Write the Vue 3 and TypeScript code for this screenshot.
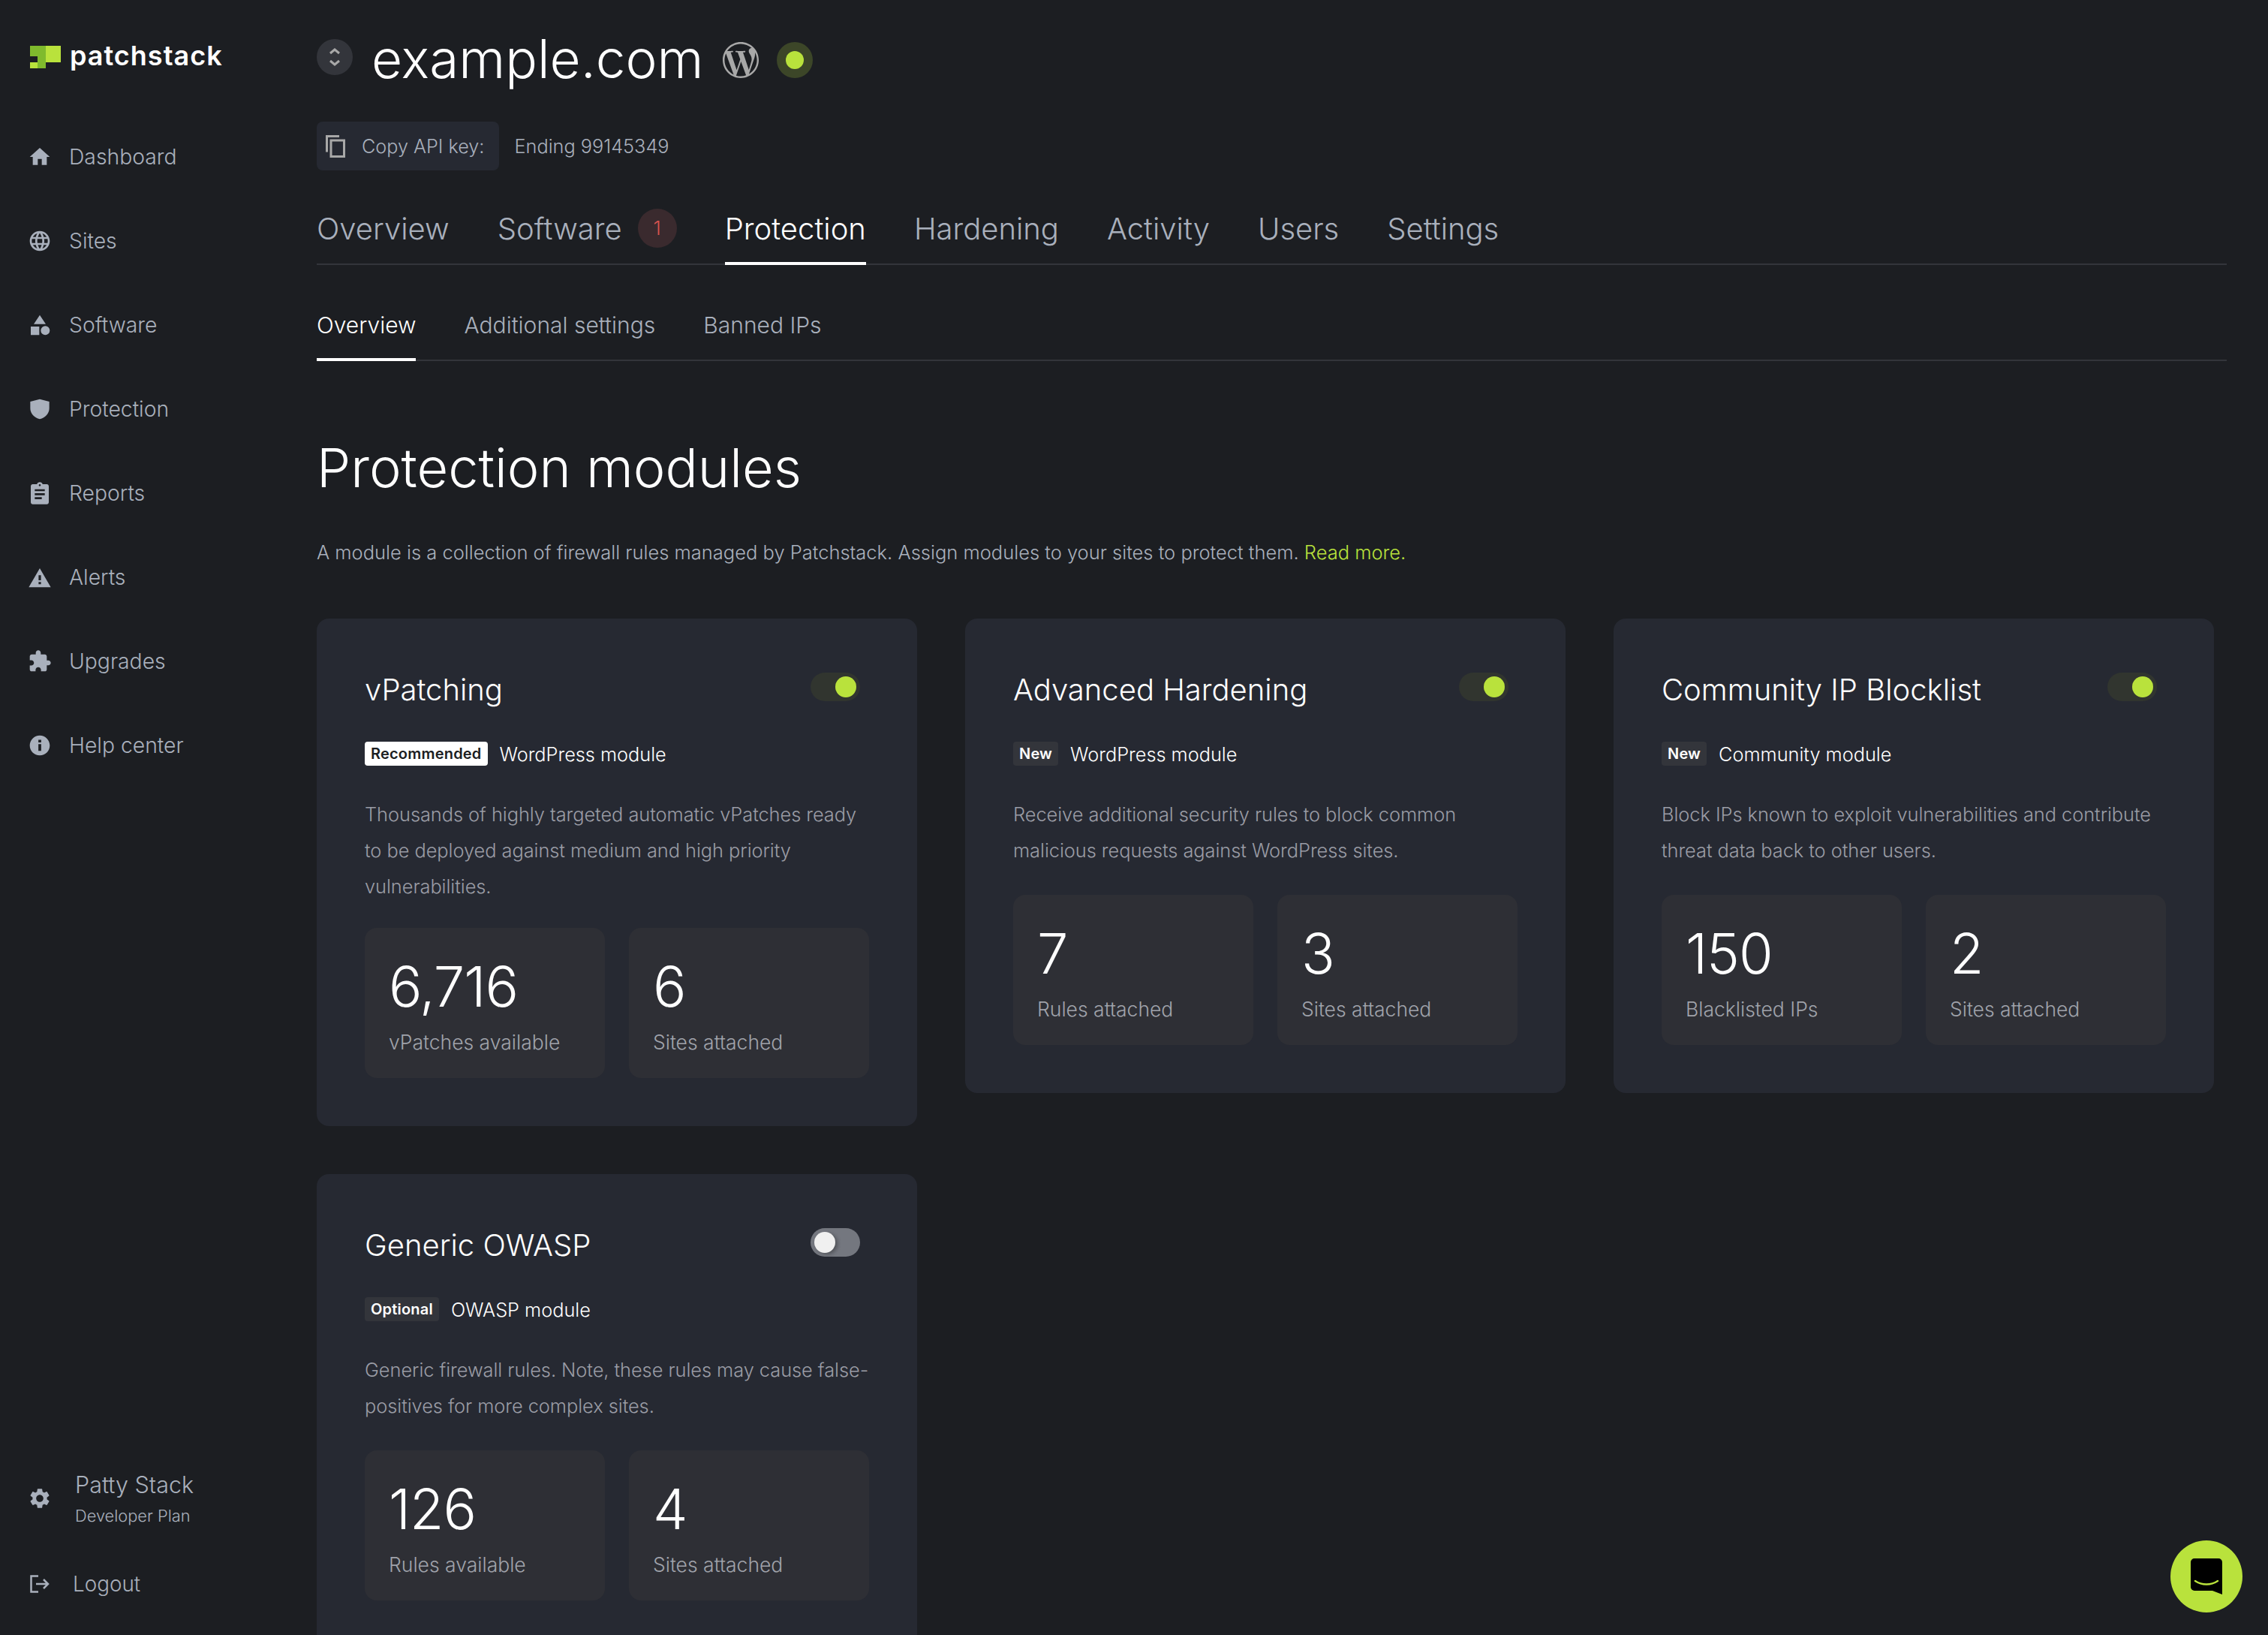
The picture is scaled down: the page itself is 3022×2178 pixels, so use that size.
<script setup lang="ts">
import { ref } from "vue"

type Stat = { value: string; label: string }
type Module = {
  title: string
  on: boolean
  badge: string
  badgeKind: string
  kind: string
  text: string
  stats: Stat[]
}

const navItems = [
  { label: "Dashboard", icon: "home" },
  { label: "Sites", icon: "globe" },
  { label: "Software", icon: "shapes" },
  { label: "Protection", icon: "shield" },
  { label: "Reports", icon: "report" },
  { label: "Alerts", icon: "alert" },
  { label: "Upgrades", icon: "puzzle" },
  { label: "Help center", icon: "info" },
]

const iconPaths: Record<string, string> = {
  home: "M10 20v-6h4v6h5v-8h3L12 3 2 12h3v8z",
  globe:
    "M11.99 2C6.47 2 2 6.48 2 12s4.47 10 9.99 10C17.52 22 22 17.52 22 12S17.52 2 11.99 2zm6.93 6h-2.95c-.32-1.25-.78-2.45-1.38-3.56 1.84.63 3.37 1.91 4.33 3.56zM12 4.04c.83 1.2 1.48 2.53 1.91 3.96h-3.82c.43-1.43 1.08-2.76 1.91-3.96zM4.26 14C4.1 13.36 4 12.69 4 12s.1-1.36.26-2h3.38c-.08.66-.14 1.32-.14 2 0 .68.06 1.34.14 2H4.26zm.82 2h2.95c.32 1.25.78 2.45 1.38 3.56-1.84-.63-3.37-1.9-4.33-3.56zm2.95-8H5.08c.96-1.66 2.49-2.93 4.33-3.56C8.81 5.55 8.35 6.75 8.03 8zM12 19.96c-.83-1.2-1.48-2.53-1.91-3.96h3.82c-.43 1.43-1.08 2.76-1.91 3.96zM14.34 14H9.66c-.09-.66-.16-1.32-.16-2 0-.68.07-1.35.16-2h4.68c.09.65.16 1.32.16 2 0 .68-.07 1.34-.16 2zm.25 5.56c.6-1.11 1.06-2.31 1.38-3.56h2.95c-.96 1.65-2.49 2.93-4.33 3.56zM16.36 14c.08-.66.14-1.32.14-2 0-.68-.06-1.34-.14-2h3.38c.16.64.26 1.31.26 2s-.1 1.36-.26 2h-3.38z",
  shapes: "M12 2l6 9H6zM3 13.5h8.5V22H3zM17.5 13a4.5 4.5 0 1 1 0 9 4.5 4.5 0 0 1 0-9z",
  shield: "M12 2l9.500 2.500v6.500c0 5.500-4 9.500-9.500 11-5.500-1.500-9.500-5.500-9.500-11V4.500z",
  report:
    "M19 3h-4.180C14.400 1.840 13.300 1 12 1c-1.300 0-2.400.840-2.820 2H5c-1.100 0-2 .900-2 2v16c0 1.100.900 2 2 2h14c1.100 0 2-.900 2-2V5c0-1.100-.900-2-2-2zm-7 0c.550 0 1 .450 1 1s-.450 1-1 1-1-.450-1-1 .450-1 1-1zm2 15H7v-2h7v2zm3-4H7v-2h10v2zm0-4H7V8h10v2z",
  alert: "M1 22h22L12 3 1 22zm12.200-3h-2.400v-2.400h2.400V19zm0-4h-2.400v-5h2.400v5z",
  puzzle:
    "M20.500 11H19V7c0-1.100-.900-2-2-2h-4V3.500C13 2.120 11.880 1 10.500 1S8 2.120 8 3.500V5H4c-1.100 0-1.990.900-1.990 2v3.800H3.500c1.490 0 2.700 1.210 2.700 2.700s-1.210 2.700-2.700 2.700H2V20c0 1.100.900 2 2 2h3.800v-1.500c0-1.490 1.210-2.700 2.700-2.700 1.490 0 2.700 1.210 2.700 2.700V22H17c1.100 0 2-.900 2-2v-4h1.500c1.380 0 2.500-1.120 2.500-2.500S21.880 11 20.500 11z",
  info: "M12 2C6.480 2 2 6.480 2 12s4.480 10 10 10 10-4.480 10-10S17.520 2 12 2zm1.400 15.500h-2.800v-6.800h2.800v6.800zm0-8.500h-2.800V6.300h2.800V9z",
  gear: "M19.140 12.940c.040-.300.060-.610.060-.940 0-.320-.020-.640-.070-.940l2.030-1.580c.180-.140.230-.410.120-.610l-1.920-3.320c-.120-.220-.370-.290-.590-.220l-2.390.960c-.500-.380-1.030-.700-1.620-.940l-.360-2.540c-.040-.240-.240-.410-.480-.410h-3.840c-.240 0-.430.170-.470.410l-.360 2.540c-.590.240-1.130.570-1.620.940l-2.390-.960c-.220-.080-.470 0-.590.220L2.740 8.870c-.120.210-.080.470.120.610l2.030 1.580c-.050.300-.090.630-.090.940s.020.640.07.940l-2.030 1.580c-.180.140-.230.410-.120.610l1.920 3.320c.120.220.370.290.590.220l2.390-.960c.500.380 1.030.700 1.620.940l.360 2.540c.050.240.240.410.480.410h3.840c.240 0 .440-.170.470-.410l.360-2.540c.590-.240 1.130-.560 1.620-.940l2.390.960c.220.080.470 0 .590-.220l1.920-3.320c.120-.220.070-.470-.120-.610l-2.010-1.580zM12 15.600c-1.980 0-3.600-1.620-3.600-3.600s1.620-3.600 3.600-3.600 3.600 1.620 3.600 3.600-1.620 3.600-3.600 3.600z",
}

const wpPath =
  "M21.469 6.825c.84 1.537 1.318 3.3 1.318 5.175 0 3.979-2.156 7.456-5.363 9.325l3.295-9.527c.615-1.54.82-2.771.82-3.864 0-.405-.026-.78-.07-1.11m-7.981.105c.647-.03 1.232-.105 1.232-.105.582-.075.514-.93-.067-.899 0 0-1.755.135-2.88.135-1.064 0-2.85-.15-2.85-.15-.585-.03-.661.855-.075.885 0 0 .54.061 1.125.09l1.68 4.605-2.37 7.08L5.354 6.9c.649-.03 1.234-.1 1.234-.1.585-.075.516-.93-.065-.896 0 0-1.746.138-2.874.138-.2 0-.438-.008-.69-.015C4.911 3.15 8.235 1.215 12 1.215c2.809 0 5.365 1.072 7.286 2.833-.046-.003-.091-.009-.141-.009-1.06 0-1.812.923-1.812 1.914 0 .89.513 1.643 1.06 2.531.411.72.89 1.643.89 2.977 0 .915-.354 1.994-.821 3.479l-1.075 3.585-3.9-11.61.001.014zM12 22.784c-1.059 0-2.081-.153-3.048-.437l3.237-9.406 3.315 9.087c.024.053.05.101.078.149-1.12.393-2.325.609-3.582.609M1.211 12c0-1.564.336-3.05.935-4.39L7.29 21.709C3.694 19.96 1.212 16.271 1.211 12M12 0C5.385 0 0 5.385 0 12s5.385 12 12 12 12-5.385 12-12S18.615 0 12 0"

const tabs = ["Overview", "Software", "Protection", "Hardening", "Activity", "Users", "Settings"]
const subTabs = ["Overview", "Additional settings", "Banned IPs"]
const activeTab = ref("Protection")
const activeSub = ref("Overview")

const modules: Module[] = [
  {
    title: "vPatching",
    on: true,
    badge: "Recommended",
    badgeKind: "white",
    kind: "WordPress module",
    text: "Thousands of highly targeted automatic vPatches ready to be deployed against medium and high priority vulnerabilities.",
    stats: [
      { value: "6,716", label: "vPatches available" },
      { value: "6", label: "Sites attached" },
    ],
  },
  {
    title: "Advanced Hardening",
    on: true,
    badge: "New",
    badgeKind: "dark",
    kind: "WordPress module",
    text: "Receive additional security rules to block common malicious requests against WordPress sites.",
    stats: [
      { value: "7", label: "Rules attached" },
      { value: "3", label: "Sites attached" },
    ],
  },
  {
    title: "Community IP Blocklist",
    on: true,
    badge: "New",
    badgeKind: "dark",
    kind: "Community module",
    text: "Block IPs known to exploit vulnerabilities and contribute threat data back to other users.",
    stats: [
      { value: "150", label: "Blacklisted IPs" },
      { value: "2", label: "Sites attached" },
    ],
  },
  {
    title: "Generic OWASP",
    on: false,
    badge: "Optional",
    badgeKind: "dark",
    kind: "OWASP module",
    text: "Generic firewall rules. Note, these rules may cause false-positives for more complex sites.",
    stats: [
      { value: "126", label: "Rules available" },
      { value: "4", label: "Sites attached" },
    ],
  },
]
</script>

<template>
  <div class="page">
    <aside class="sidebar">
      <div class="brand">
        <svg class="logo" viewBox="0 0 41 30" width="41" height="30">
          <rect x="0" y="0" width="21" height="14" fill="#7fba2d" />
          <rect x="21" y="0" width="20" height="22" fill="#b9e23c" />
          <rect x="10" y="14" width="11" height="8" fill="#7fba2d" />
          <rect x="0" y="22" width="10" height="8" fill="#b9e23c" />
          <rect x="10" y="22" width="11" height="8" fill="#7fba2d" />
        </svg>
        <span class="brand-name">patchstack</span>
      </div>

      <nav class="nav">
        <a v-for="item in navItems" :key="item.label" class="nav-item">
          <svg class="nav-icon" viewBox="0 0 24 24"><path :d="iconPaths[item.icon]" /></svg>
          <span>{{ item.label }}</span>
        </a>
      </nav>

      <div class="account">
        <svg class="nav-icon" viewBox="0 0 24 24"><path :d="iconPaths.gear" /></svg>
        <div>
          <div class="account-name">Patty Stack</div>
          <div class="account-plan">Developer Plan</div>
        </div>
      </div>
      <a class="logout">
        <svg class="logout-icon" viewBox="0 0 26 24" width="26" height="24">
          <path d="M11 1.500H1.500v21H11M8 12h16M18 6l6 6-6 6" />
        </svg>
        <span>Logout</span>
      </a>
    </aside>

    <main class="main">
      <header class="site-head">
        <button class="switcher">
          <svg viewBox="0 0 16 24" width="16" height="24"><path d="M2 7l6-5 6 5M2 17l6 5 6-5" /></svg>
        </button>
        <h1 class="site-name">example.com</h1>
        <svg class="wp" viewBox="0 0 24 24" width="48" height="48"><path :d="wpPath" /></svg>
        <span class="status"><i></i></span>
      </header>

      <div class="api-row">
        <button class="copy">
          <svg viewBox="0 0 26 30" width="26" height="30">
            <path d="M18 1.500H1.500v21" />
            <rect x="7" y="7" width="17.500" height="21.500" />
          </svg>
          <span>Copy API key:</span>
        </button>
        <span class="api-end">Ending 99145349</span>
      </div>

      <div class="tabs">
        <a v-for="tab in tabs" :key="tab" class="tab" :class="{ active: tab === activeTab }">
          {{ tab }}
          <span v-if="tab === 'Software'" class="count">1</span>
        </a>
      </div>

      <div class="subtabs">
        <a v-for="tab in subTabs" :key="tab" class="subtab" :class="{ active: tab === activeSub }">{{ tab }}</a>
      </div>

      <h2 class="heading">Protection modules</h2>
      <p class="intro">
        A module is a collection of firewall rules managed by Patchstack. Assign modules to your sites to protect them.
        <a class="more">Read more.</a>
      </p>

      <section class="grid">
        <article v-for="mod in modules" :key="mod.title" class="card">
          <div class="card-top">
            <h3>{{ mod.title }}</h3>
            <span class="toggle" :class="{ on: mod.on }"><i></i></span>
          </div>
          <div class="tags">
            <span class="badge" :class="mod.badgeKind">{{ mod.badge }}</span>
            <span class="kind">{{ mod.kind }}</span>
          </div>
          <p class="text">{{ mod.text }}</p>
          <div class="stats">
            <div v-for="stat in mod.stats" :key="stat.label" class="stat">
              <div class="value">{{ stat.value }}</div>
              <div class="label">{{ stat.label }}</div>
            </div>
          </div>
        </article>
      </section>
    </main>

    <button class="chat">
      <svg viewBox="0 0 42 48" width="42" height="48">
        <path d="M5 0h32a5 5 0 0 1 5 5v43l-13-5H5a5 5 0 0 1-5-5V5a5 5 0 0 1 5-5z" fill="#000" />
        <path d="M6 30c9 6 21 6 30 0" fill="none" stroke="#b9e23c" stroke-width="2.500" stroke-linecap="round" />
      </svg>
    </button>
  </div>
</template>

<style>
html,
body {
  margin: 0;
  background: #1c1e22;
}
</style>

<style scoped>
.page {
  position: relative;
  display: flex;
  width: 3022px;
  height: 2178px;
  overflow: hidden;
  background: #1c1e22;
  color: #fff;
  font-family: Inter, "Liberation Sans", sans-serif;
  font-weight: 350;
}

.sidebar {
  width: 422px;
  flex: none;
  display: flex;
  flex-direction: column;
  padding: 0 0 0 40px;
  box-sizing: border-box;
  color: #a9b0bc;
}

.brand {
  display: flex;
  align-items: center;
  gap: 12px;
  height: 30px;
  margin-top: 61px;
}

.brand-name {
  font-size: 36px;
  font-weight: 600;
  letter-spacing: 1px;
  line-height: 30px;
  padding-bottom: 4px;
  color: #fff;
}

.nav {
  display: flex;
  flex-direction: column;
  margin-top: 62px;
}

.nav-item {
  display: flex;
  align-items: center;
  gap: 23px;
  height: 112px;
  font-size: 28.300px;
}

.nav-icon {
  width: 32px;
  height: 32px;
  flex: none;
  margin-left: -3px;
  fill: #a9b0bc;
}

.account {
  display: flex;
  align-items: center;
  gap: 31px;
  margin-top: auto;
}

.account-name {
  font-size: 30.500px;
  line-height: 40px;
}

.account-plan {
  font-size: 21.800px;
  line-height: 30px;
  margin-top: 6px;
}

.logout {
  display: flex;
  align-items: center;
  gap: 31px;
  margin-top: 58px;
  margin-bottom: 50px;
  font-size: 27.800px;
  line-height: 36px;
}

.logout-icon {
  flex: none;
  fill: none;
  stroke: #a9b0bc;
  stroke-width: 2.500;
}

.main {
  flex: 1;
  min-width: 0;
  padding: 52px 55px 0 0;
}

.site-head {
  display: flex;
  align-items: flex-start;
  height: 52px;
}

.switcher {
  width: 48px;
  height: 48px;
  border: none;
  padding: 0;
  border-radius: 50%;
  background: #33353b;
  display: flex;
  align-items: center;
  justify-content: center;
}

.switcher svg {
  fill: none;
  stroke: #a8a8a8;
  stroke-width: 3;
}

.site-name {
  margin: 0 26px 0 25px;
  font-size: 71px;
  font-weight: 300;
  line-height: 52px;
}

.wp {
  margin-top: 4px;
  fill: #a8a8a8;
}

.status {
  width: 48px;
  height: 48px;
  margin-top: 4px;
  margin-left: 24px;
  border-radius: 50%;
  background: #3c4628;
  display: flex;
  align-items: center;
  justify-content: center;
}

.status i {
  width: 24px;
  height: 24px;
  border-radius: 50%;
  background: #b9e23c;
}

.api-row {
  display: flex;
  align-items: center;
  gap: 20px;
  margin-top: 58px;
}

.copy {
  display: flex;
  align-items: center;
  gap: 22px;
  height: 65px;
  padding: 0 20px 0 12px;
  border: none;
  border-radius: 8px;
  background: #262932;
  color: #a9b0bc;
  font: inherit;
  font-size: 25.200px;
}

.copy svg {
  fill: none;
  stroke: #a8a8a8;
  stroke-width: 3;
}

.api-end {
  font-size: 25.300px;
  color: #a9b0bc;
}

.tabs {
  display: flex;
  gap: 64px;
  margin-top: 48px;
  height: 76px;
  border-bottom: 2px solid #33353b;
}

.tab {
  display: flex;
  align-items: flex-start;
  gap: 21px;
  height: 78px;
  box-sizing: border-box;
  font-size: 40px;
  line-height: 60px;
  color: #a9b0bc;
}

.tab.active {
  color: #fff;
  border-bottom: 4px solid #fff;
}

.count {
  width: 52px;
  height: 52px;
  margin-top: 3px;
  border-radius: 50%;
  background: #3a2a2e;
  color: #d9534f;
  font-size: 26px;
  line-height: 52px;
  text-align: center;
}

.subtabs {
  display: flex;
  gap: 64px;
  margin-top: 46px;
  height: 80px;
  border-bottom: 2px solid #33353b;
}

.subtab {
  height: 82px;
  box-sizing: border-box;
  font-size: 30px;
  line-height: 68px;
  color: #a9b0bc;
}

.subtab.active {
  color: #fff;
  border-bottom: 4px solid #fff;
}

.heading {
  margin: 97px 0 0;
  font-size: 72px;
  font-weight: 300;
  line-height: 90px;
}

.intro {
  margin: 48px 0 0;
  font-size: 25.500px;
  line-height: 40px;
  color: #a9b0bc;
}

.more {
  color: #b9e23c;
}

.grid {
  display: grid;
  grid-template-columns: repeat(3, 800px);
  gap: 64px;
  align-items: start;
  margin-top: 68px;
}

.card {
  padding: 64px;
  border-radius: 16px;
  background: #262932;
}

.card-top {
  display: flex;
  justify-content: space-between;
  height: 64px;
  padding-right: 12px;
}

.card-top h3 {
  margin: 0;
  font-size: 40px;
  font-weight: 350;
  line-height: 62px;
}

.toggle {
  width: 66px;
  height: 38px;
  margin-top: 8px;
  border-radius: 19px;
  background: #74777f;
  display: flex;
  align-items: center;
  padding: 0 5px;
  box-sizing: border-box;
}

.toggle i {
  width: 28px;
  height: 28px;
  border-radius: 50%;
  background: #f0f0f0;
  box-shadow: 3px 2px 5px rgba(0, 0, 0, 0.3);
}

.toggle.on {
  background: #31352f;
  justify-content: flex-end;
}

.toggle.on i {
  background: #b9e23c;
  box-shadow: none;
}

.tags {
  display: flex;
  align-items: center;
  gap: 16px;
  margin-top: 36px;
  height: 32px;
}

.badge {
  height: 32px;
  padding: 0 8px;
  border-radius: 4px;
  font-size: 20px;
  font-weight: 600;
  letter-spacing: 0.2px;
  line-height: 32px;
}

.badge.white {
  background: #fff;
  color: #1c1e22;
}

.badge.dark {
  background: #33353b;
  color: #fff;
}

.kind {
  font-size: 25.300px;
}

.text {
  margin: 41px 0 0;
  min-height: 100px;
  font-size: 25.400px;
  line-height: 48px;
  letter-spacing: -0.05px;
  color: #9a9ca5;
}

.stats {
  display: grid;
  grid-template-columns: 320px 320px;
  gap: 32px;
  margin-top: 31px;
}

.stat {
  height: 200px;
  padding: 34px 32px 0;
  box-sizing: border-box;
  border-radius: 16px;
  background: #2e2f35;
}

.value {
  font-size: 74px;
  font-weight: 300;
  letter-spacing: -1px;
  line-height: 88px;
}

.label {
  margin-top: 12px;
  font-size: 26.500px;
  line-height: 36px;
  color: #a0a3ab;
}

.chat {
  position: absolute;
  left: 2892px;
  top: 2052px;
  width: 96px;
  height: 96px;
  border: none;
  padding: 0;
  border-radius: 50%;
  background: #b9e23c;
  display: flex;
  align-items: center;
  justify-content: center;
}
</style>
